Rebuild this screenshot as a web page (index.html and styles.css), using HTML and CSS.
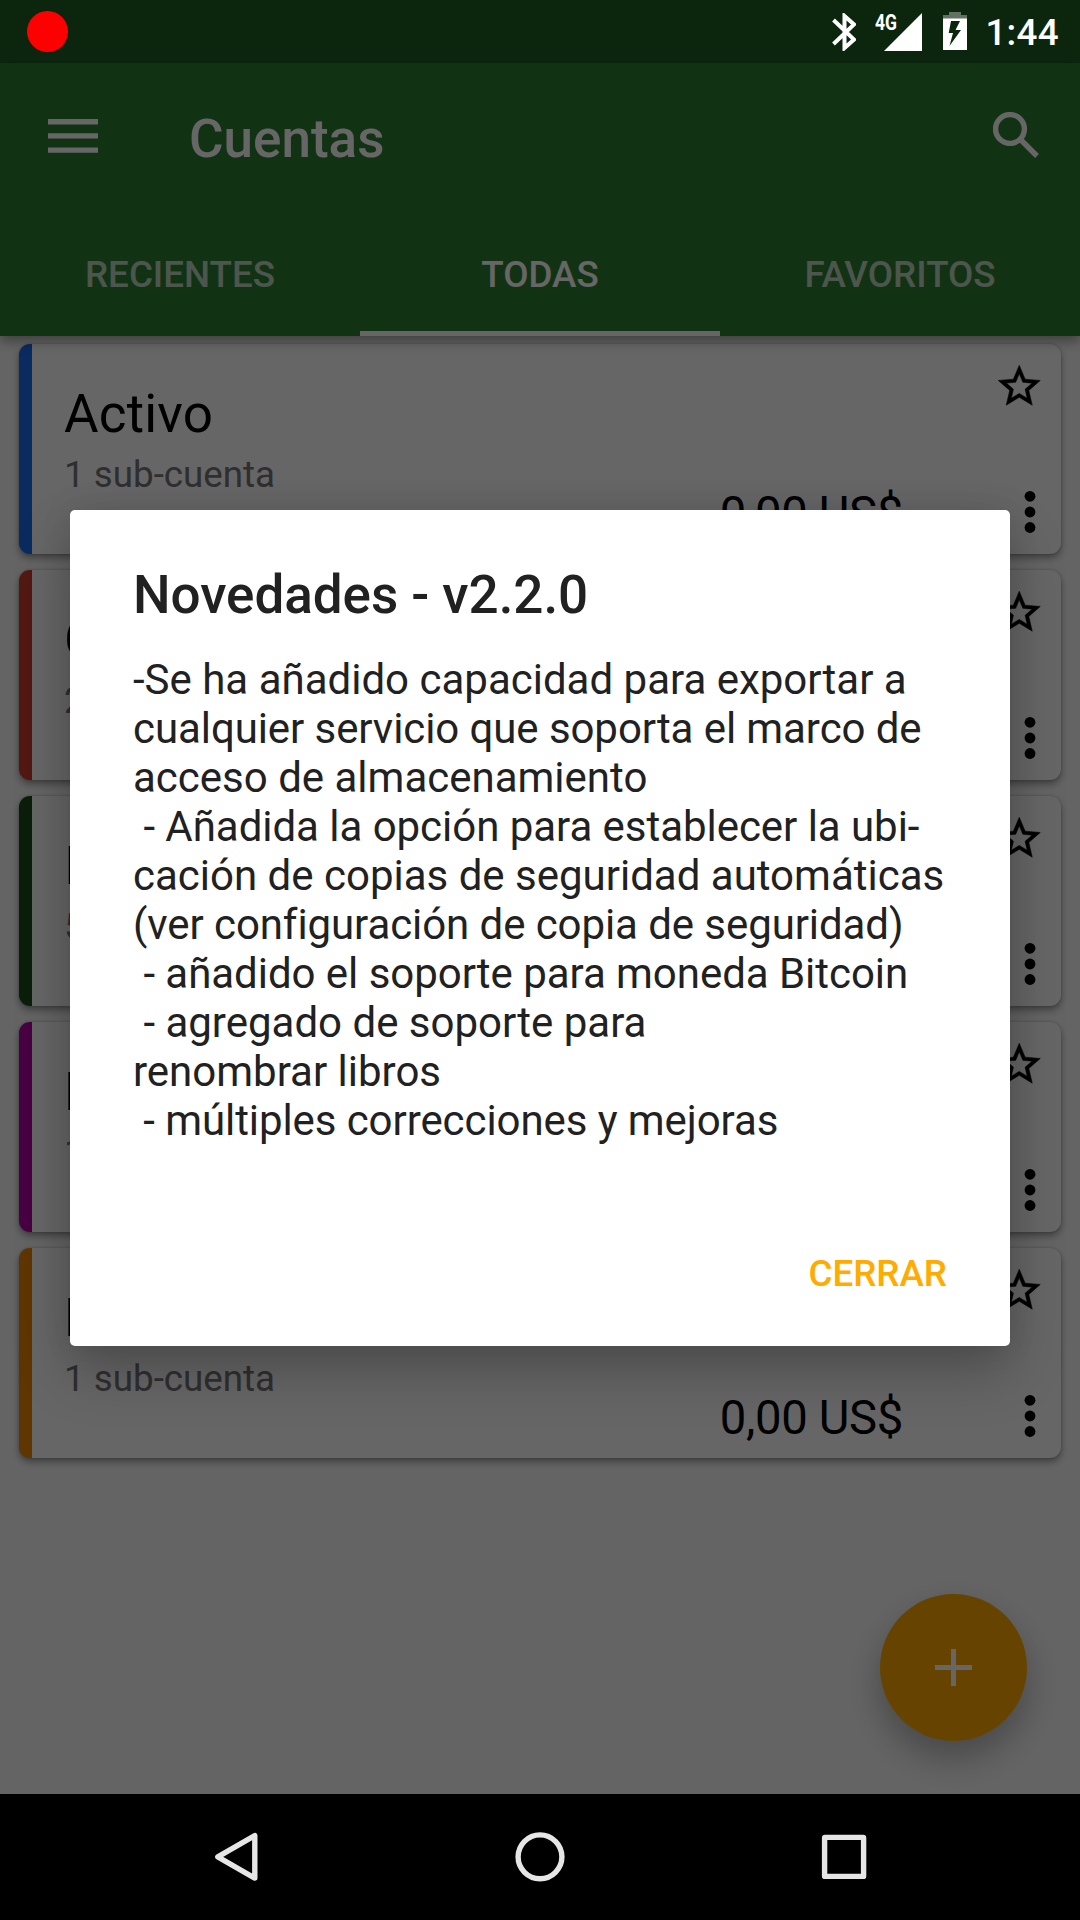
FILE: index.html
```html
<!DOCTYPE html>
<html lang="es">
<head>
<meta charset="utf-8">
<title>Cuentas</title>
<link rel="stylesheet" href="styles.css">
</head>
<body>
<svg class="sprites" width="0" height="0" aria-hidden="true">
  <symbol id="star" viewBox="0 0 24 24"><path d="M22 9.24l-7.19-.62L12 2 9.19 8.63 2 9.24l5.46 4.73L5.82 21 12 17.27 18.18 21l-1.63-7.03L22 9.24zM12 15.4l-3.76 2.27 1-4.28-3.32-2.88 4.38-.38L12 6.1l1.71 4.04 4.38.38-3.32 2.88 1 4.28L12 15.4z"/></symbol>
  <symbol id="more" viewBox="0 0 12 44"><circle cx="6" cy="6.3" r="5.4"/><circle cx="6" cy="22" r="5.4"/><circle cx="6" cy="37.5" r="5.4"/></symbol>
</svg>
<div class="screen">
  <div class="status-bg"></div>
  <header class="appbar">
    <div class="toolbar">
      <svg class="menu" viewBox="0 0 50 34"><path d="M0 0h50v5.4H0zM0 14.2h50v5.4H0zM0 28.4h50v5.4H0z"/></svg>
      <h1 class="title">Cuentas</h1>
      <svg class="search" viewBox="0 0 46 46"><circle cx="17" cy="17" r="14.4"/><path d="M28.5 28.5L44 44"/></svg>
    </div>
    <nav class="tabs">
      <span class="tab">RECIENTES</span>
      <span class="tab tab-active">TODAS</span>
      <span class="tab">FAVORITOS</span>
    </nav>
  </header>
  <main class="accounts">
    <article class="card blue">
      <div class="info"><h2 class="name">Activo</h2><p class="sub">1 sub-cuenta</p></div>
      <span class="amount">0,00 US$</span>
      <div class="actions"><svg class="star"><use href="#star"/></svg><svg class="more"><use href="#more"/></svg></div>
    </article>
    <article class="card red">
      <div class="info"><h2 class="name">Gastos</h2><p class="sub">2 sub-cuentas</p></div>
      <div class="actions"><svg class="star"><use href="#star"/></svg><svg class="more"><use href="#more"/></svg></div>
    </article>
    <article class="card green">
      <div class="info"><h2 class="name">Ingresos</h2><p class="sub">5 sub-cuentas</p></div>
      <div class="actions"><svg class="star"><use href="#star"/></svg><svg class="more"><use href="#more"/></svg></div>
    </article>
    <article class="card purple">
      <div class="info"><h2 class="name">Pasivo</h2><p class="sub">1 sub-cuenta</p></div>
      <div class="actions"><svg class="star"><use href="#star"/></svg><svg class="more"><use href="#more"/></svg></div>
    </article>
    <article class="card orange">
      <div class="info"><h2 class="name">Patrimonio</h2><p class="sub">1 sub-cuenta</p></div>
      <span class="amount">0,00 US$</span>
      <div class="actions"><svg class="star"><use href="#star"/></svg><svg class="more"><use href="#more"/></svg></div>
    </article>
  </main>
  <div class="fab"><svg class="plus" viewBox="0 0 37 37"><path d="M16 0h5v16h16v5H21v16h-5V21H0v-5h16z"/></svg></div>
  <footer class="navbar">
    <svg class="nav-icon" viewBox="0 0 56 56"><path d="M46.800 6.500v42.600L9.800 27.800z"/></svg>
    <svg class="nav-icon" viewBox="0 0 56 56"><circle cx="28" cy="27.8" r="21.9"/></svg>
    <svg class="nav-icon" viewBox="0 0 56 56"><rect x="8.6" y="8.4" width="39" height="39" rx=".5"/></svg>
  </footer>

  <div class="scrim">
    <section class="dialog">
      <h2 class="dialog-title">Novedades - v2.2.0</h2>
      <p class="dialog-text">-Se ha añadido capacidad para exportar a
<span class="tight">cualquier servicio que soporta el marco de</span>
acceso de almacenamiento
<span class="snug"> - Añadida la opción para establecer la ubi-</span>
cación de copias de seguridad automáticas
<span class="tight">(ver configuración de copia de seguridad)</span>
<span class="snug"> - añadido el soporte para moneda Bitcoin</span>
 - agregado de soporte para
renombrar libros
<span class="tight"> - múltiples correcciones y mejoras</span></p>
      <button class="dialog-button">CERRAR</button>
    </section>
  </div>

  <div class="status">
    <span class="record"></span>
    <svg class="bluetooth" viewBox="0 0 24 38"><path d="M1.5 7L22 26.500 12.500 35V3L22 11.500 1.500 31" /></svg>
    <div class="signal">
      <svg class="triangle" viewBox="0 0 38 38"><path d="M38 0v38H0z"/></svg>
      <span class="network">4G</span>
    </div>
    <svg class="battery" viewBox="0 0 24 38"><path class="cap" d="M6 0h12v3h6v4H0V3h6z"/><path d="M0 6.500h24V38H0zM8 9L5.700 21H10L6.500 34 18 18H12.500L17 9z" fill-rule="evenodd"/></svg>
    <span class="clock">1:44</span>
  </div>
</div>
</body>
</html>
```
FILE: styles.css
```css
* { box-sizing: border-box; margin: 0; padding: 0; }
body { background: #000; }
.sprites { position: absolute; }
.screen {
  position: relative;
  display: flex;
  flex-direction: column;
  width: 1080px;
  height: 1920px;
  overflow: hidden;
  background: #fafafa;
  font-family: Roboto, sans-serif;
}
.status-bg { flex: none; height: 63px; background: #1f5f24; }

.appbar {
  position: relative;
  flex: none;
  height: 273px;
  background: #2f7d33;
  box-shadow: 0 5px 12px rgba(0, 0, 0, .38);
  color: #fff;
}
.toolbar { display: flex; align-items: flex-start; height: 147px; padding: 0 41px 0 48px; }
.menu { width: 50px; height: 34px; margin-top: 56px; fill: #fff; }
.title { margin: 45px auto 0 91px; font-size: 53px; line-height: 62px; font-weight: 500; }
.search { width: 46px; height: 46px; margin-top: 49px; fill: none; stroke: #fff; stroke-width: 5.400px; }
.tabs { display: grid; grid-template-columns: repeat(3, 1fr); height: 126px; }
.tab {
  padding-top: 43px;
  font-size: 36.75px;
  line-height: 44px;
  font-weight: 500;
  text-align: center;
  color: rgba(255, 255, 255, .7);
}
.tab-active { color: #fff; border-bottom: 5px solid #fff; }

.accounts { display: flex; flex-direction: column; gap: 16px; flex: 1; padding: 8px 19px 0; }
.card {
  display: flex;
  height: 210px;
  padding-right: 20px;
  border-left: 13px solid;
  border-radius: 11px;
  background: #fff;
  box-shadow: 0 4px 7px rgba(0, 0, 0, .36), 0 0 3px rgba(0, 0, 0, .18);
}
.blue { border-color: #186bf0; }
.red { border-color: #cc3c2c; }
.green { border-color: #194c18; }
.purple { border-color: #b500a5; }
.orange { border-color: #ed8400; }
.info { flex: 1; padding: 39px 0 0 32px; }
.name { font-size: 53px; line-height: 62px; font-weight: 400; letter-spacing: .2px; color: #000; }
.sub { margin-top: 8px; font-size: 36.75px; line-height: 44px; color: #757575; }
.amount { padding-top: 142px; font-size: 47.25px; line-height: 56px; letter-spacing: -.35px; color: #000; white-space: nowrap; }
.actions { display: flex; flex-direction: column; width: 138px; align-items: flex-end; }
.star { width: 50.500px; height: 50.500px; margin: 16.500px -3.300px 0 0; stroke: #000; stroke-width: .25px; }
.more { width: 12px; height: 44px; margin: 79px 5px 0 0; }

.fab {
  position: absolute;
  left: 880px;
  top: 1594px;
  display: grid;
  place-items: center;
  width: 147px;
  height: 147px;
  border-radius: 50%;
  background: #ffab00;
  box-shadow: 0 17px 34px rgba(0, 0, 0, .28);
}
.plus { width: 37px; height: 37px; fill: #fff; }

.navbar {
  position: relative;
  z-index: 3;
  flex: none;
  display: flex;
  justify-content: center;
  gap: 248px;
  height: 126px;
  padding-top: 35px;
  background: #000;
}
.nav-icon { width: 56px; height: 56px; fill: none; stroke: #e6e6e6; stroke-width: 5.400px; stroke-linejoin: round; }

.scrim { position: absolute; inset: 0; z-index: 2; background: rgba(0, 0, 0, .6); }
.dialog {
  display: flex;
  flex-direction: column;
  width: 940px;
  height: 836px;
  margin: 510px auto 0;
  padding: 54px 63px 0;
  border-radius: 5px;
  background: #fff;
  box-shadow: 0 26px 56px rgba(0, 0, 0, .24), 0 0 30px rgba(0, 0, 0, .1);
  color: #212121;
}
.dialog-title { font-size: 53px; line-height: 62px; font-weight: 500; letter-spacing: -.05px; }
.dialog-text { margin-top: 29px; font-size: 42px; line-height: 49px; white-space: pre; }
.tight { letter-spacing: -.08px; }
.snug { letter-spacing: -.04px; }
.dialog-button {
  align-self: flex-end;
  margin-top: 107px;
  border: 0;
  background: none;
  font: 500 36.75px/44px Roboto, sans-serif;
  color: #ffab00;
}

.status {
  position: absolute;
  inset: 0 0 auto;
  z-index: 4;
  display: flex;
  align-items: flex-start;
  height: 63px;
  padding: 0 21px 0 27px;
  color: #fff;
  fill: #fff;
}
.record { width: 41px; height: 41px; margin: 11px auto 0 0; border-radius: 50%; background: #f00; }
.bluetooth { width: 24px; height: 38px; margin: 12.500px 19px 0 0; fill: none; stroke: #fff; stroke-width: 4px; }
.signal { position: relative; width: 47px; height: 63px; }
.triangle { position: absolute; left: 9px; top: 13px; width: 38px; height: 38px; }
.network {
  position: absolute;
  left: 0;
  top: 9px;
  font-size: 22.500px;
  line-height: 27px;
  font-weight: 700;
  transform: scaleX(.78);
  transform-origin: left;
}
.battery { width: 24px; height: 38px; margin: 12px 18px 0 21.500px; }
.cap { opacity: .35; }
.clock { margin-top: 11px; font-size: 36.75px; line-height: 44px; font-weight: 500; letter-spacing: .3px; }
```
